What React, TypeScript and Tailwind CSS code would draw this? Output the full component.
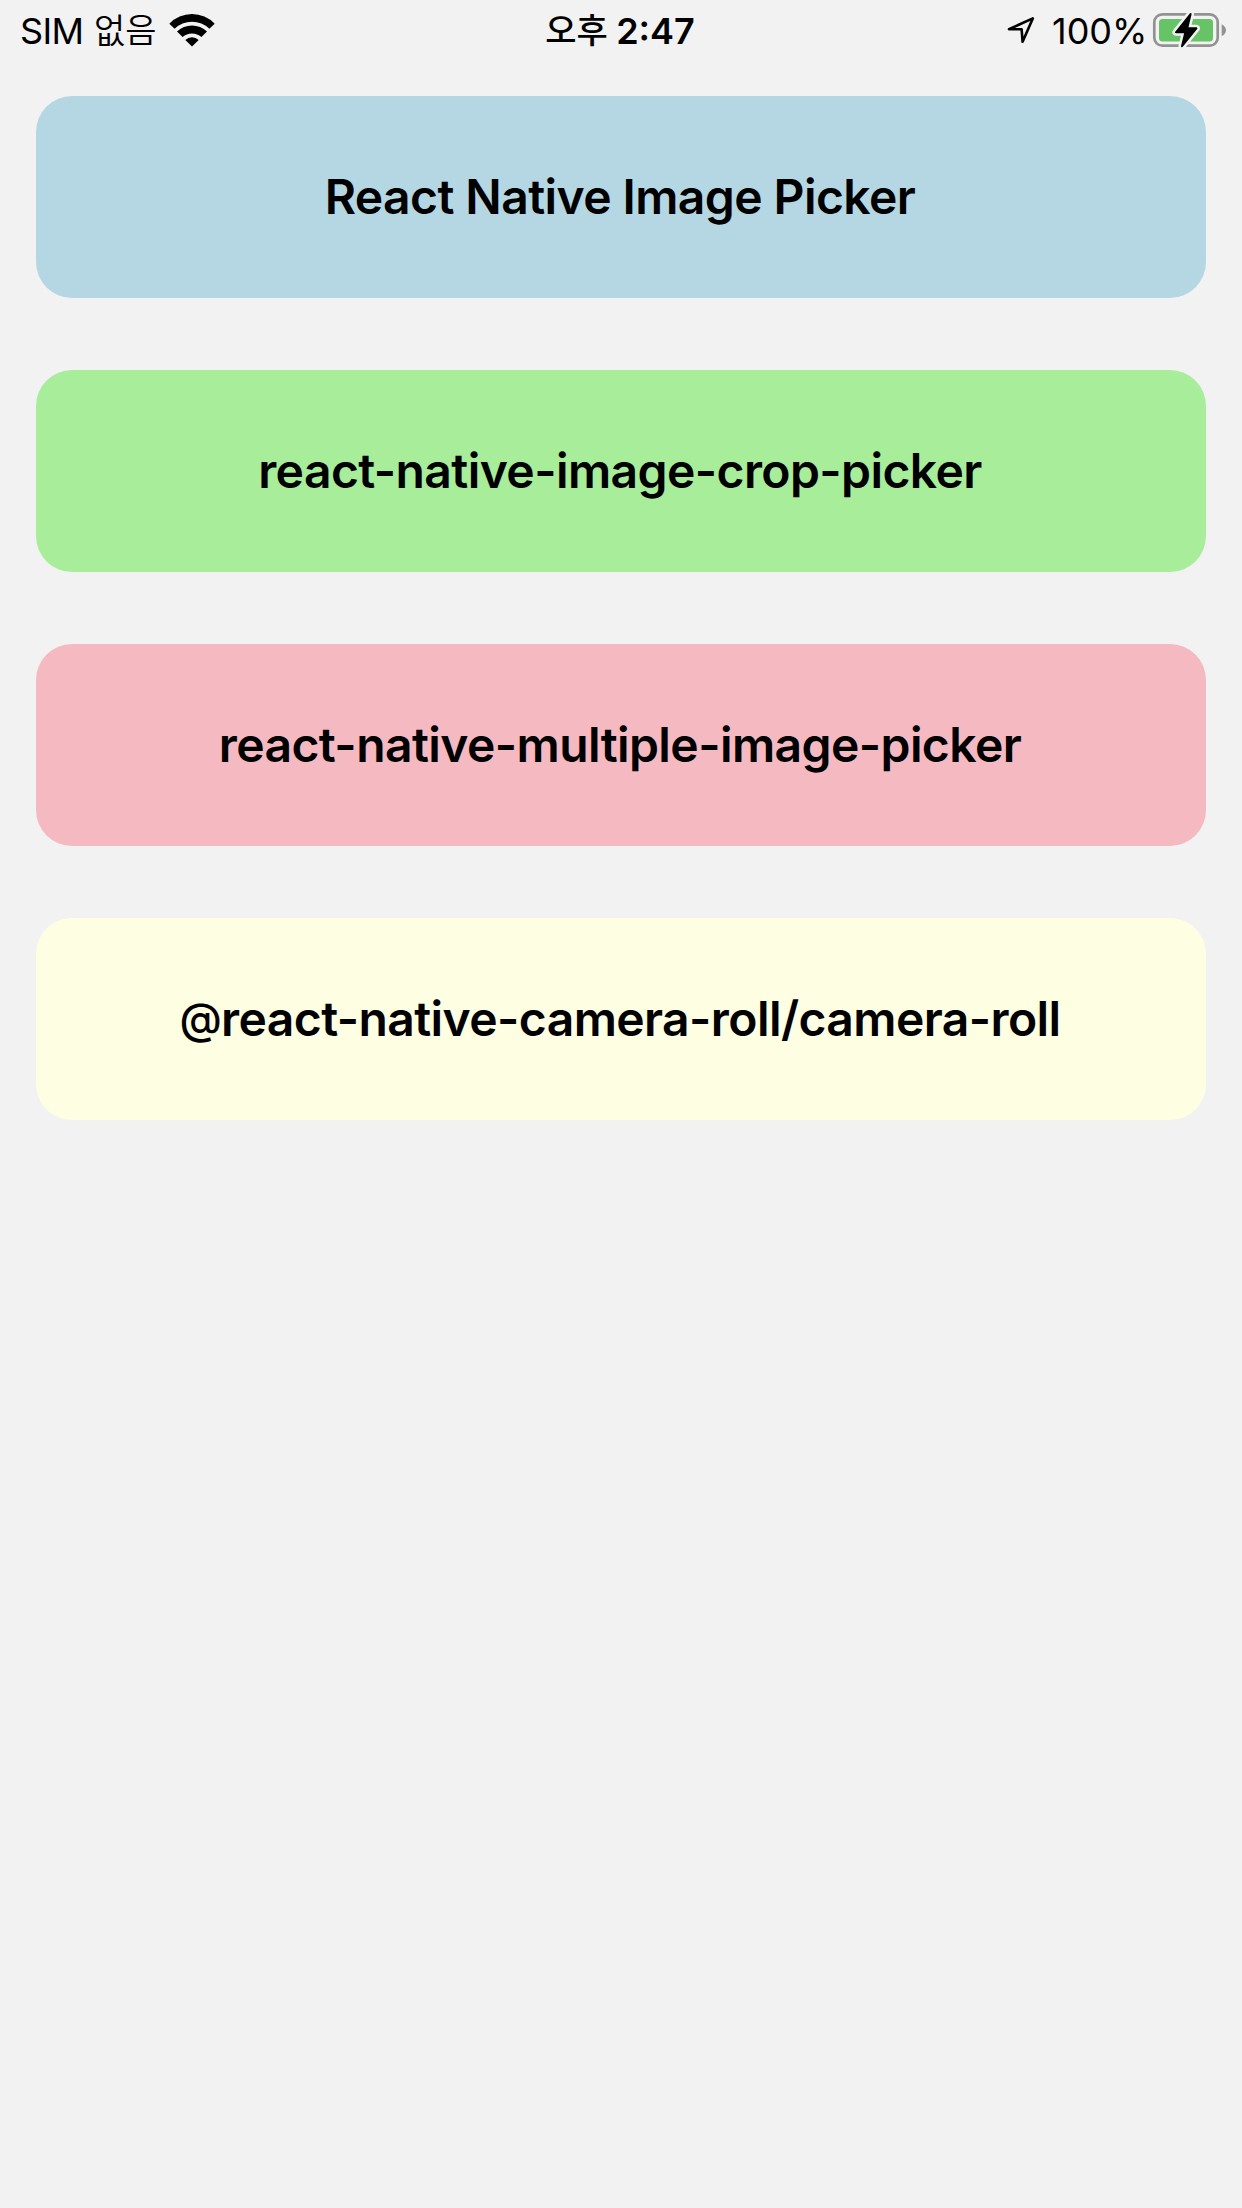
const Wifi = () => (
  <svg width="48" height="34" viewBox="0 0 48 34" className="block">
    <path d="M1.3 10.7A31.6 31.6 0 0 1 46.7 10.7L41.4 15.8A24.8 24.8 0 0 0 6.6 15.8ZM9 18.6A21.5 21.5 0 0 1 39 18.6L33.4 24.1A13.8 13.8 0 0 0 14.6 24.1ZM17.3 26.9A10 10 0 0 1 30.7 26.9L24 33.6Z" />
  </svg>
);

const Location = () => (
  <svg width="30" height="30" viewBox="0 0 30 30" className="block">
    <path
      d="M26.8 3.4 3 14.2H15.6L16.6 26.8Z"
      fill="none"
      stroke="currentColor"
      strokeWidth="2.6"
      strokeLinejoin="round"
    />
  </svg>
);

const bolt = 'M39.6 3 25 21.3H34.4L31 35.2 45.4 17.3H36.2Z';

const Battery = () => (
  <svg width="76" height="38" viewBox="0 0 76 38" className="block">
    <rect x="3.3" y="3.3" width="63.4" height="31.4" rx="8" fill="none" stroke="#929292" strokeWidth="2.7" />
    <rect x="8" y="8" width="54" height="22.5" rx="3.5" fill="#66c466" />
    <path d="M70.7 13.2Q75 15.5 75 19.2T70.7 25.2Z" fill="#929292" />
    <path d={bolt} stroke="#f2f2f2" strokeWidth="7" strokeLinejoin="round" />
    <path d={bolt} stroke="#000" strokeWidth="2" strokeLinejoin="round" />
  </svg>
);

const cards = [
  { label: 'React Native Image Picker', box: 'bg-[#b5d7e3]' },
  { label: 'react-native-image-crop-picker', box: 'bg-[#a7ed9a]' },
  { label: 'react-native-multiple-image-picker', box: 'bg-[#f5b9c1]' },
  { label: 'react-native-camera-roll/camera-roll', scope: '@', box: 'bg-[#feffe2]' },
];

export default function App() {
  return (
    <div className="h-[2208px] w-[1242px] bg-[#f2f2f2] text-black font-['Inter','Noto_Sans_CJK_KR',sans-serif]">
      <header className="grid h-[60px] grid-cols-[1fr_auto_1fr] items-center pr-[15px] pl-5 text-[36px] leading-[58px]">
        <div className="flex items-center">
          <span className="w-[74px] pt-0.5 tracking-[-0.6px]">SIM</span>
          <span className="w-[74px] pt-0.5 text-[34px] font-[350]">없음</span>
          <Wifi />
        </div>
        <div className="flex items-center pt-0.5 pr-[7px]">
          <span className="w-[71px] text-[34px] font-medium">오후</span>
          <span className="font-semibold">2:47</span>
        </div>
        <div className="flex items-center justify-end">
          <Location />
          <span className="ml-4 w-[99px] pt-0.5">100%</span>
          <Battery />
        </div>
      </header>
      <main className="flex flex-col gap-[72px] px-9 pt-9">
        {cards.map((card) => (
          <button
            key={card.label}
            className={`flex h-[202px] items-center justify-center rounded-[36px] pr-0.5 text-[48px] font-semibold tracking-[-0.58px] ${card.box}`}
          >
            <span>
              {card.scope && <span className="align-[2px] text-[43px] leading-none font-medium">{card.scope}</span>}
              {card.label}
            </span>
          </button>
        ))}
      </main>
    </div>
  );
}
